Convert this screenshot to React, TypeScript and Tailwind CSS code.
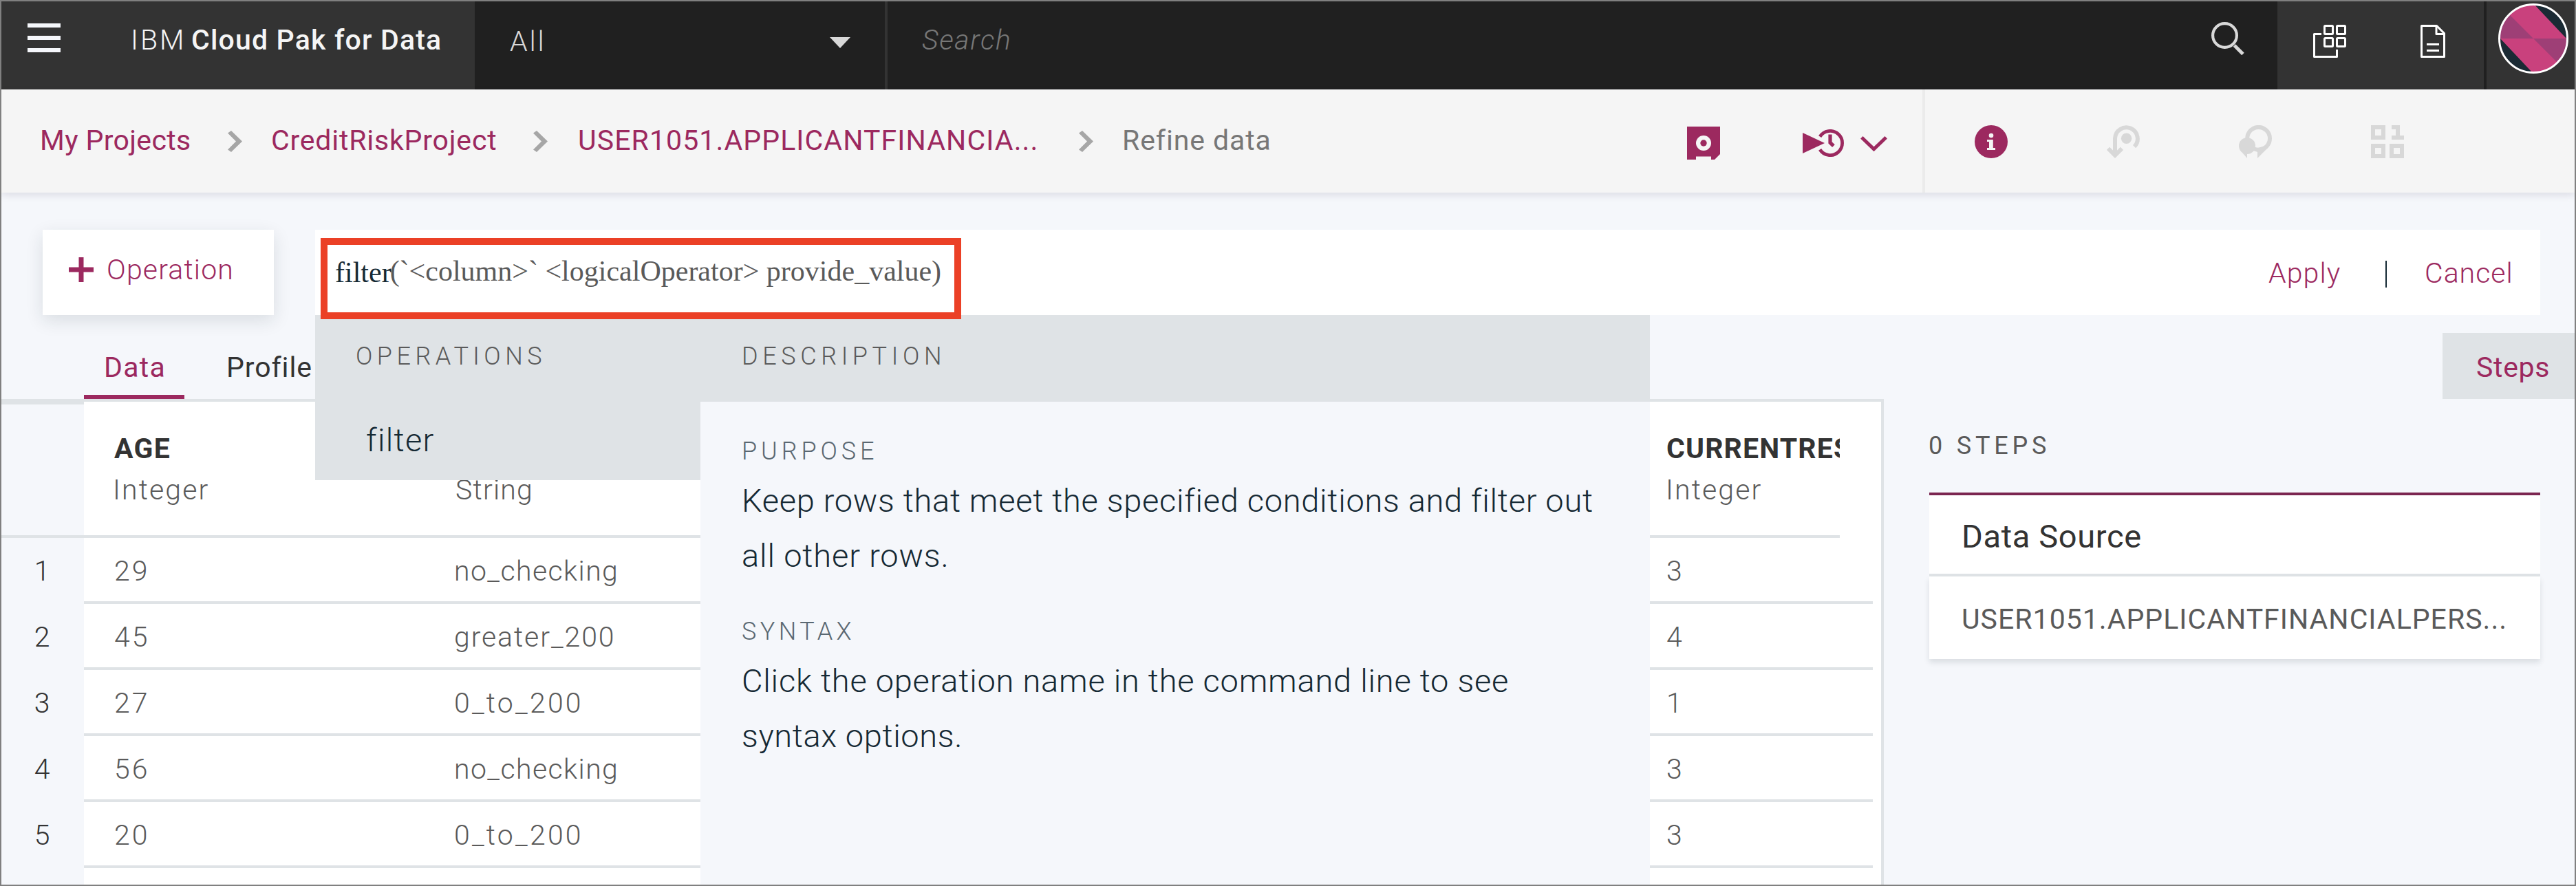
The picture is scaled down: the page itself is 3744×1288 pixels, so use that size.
import React from "react";

const numbers = ["1", "2", "3", "4", "5"];

const rows = [
  { age: "29", checking: "no_checking", residence: "3" },
  { age: "45", checking: "greater_200", residence: "4" },
  { age: "27", checking: "0_to_200", residence: "1" },
  { age: "56", checking: "no_checking", residence: "3" },
  { age: "20", checking: "0_to_200", residence: "3" },
];

function Crumb() {
  return (
    <svg className="mt-[60px] h-[31px] w-[21px] shrink-0" viewBox="0 0 21 31" fill="#a6a6a6">
      <path d="M5 0 21 15.5 5 31 0 27.5 12 15.5 0 3.5Z" />
    </svg>
  );
}

function Header() {
  return (
    <header className="flex h-[128px] shrink-0 text-[41px] font-light text-[#f5f5f5]">
      <div className="flex w-[688px] bg-[#333333] pl-[38px]">
        <div className="mt-[32px] flex w-[48px] shrink-0 flex-col gap-3">
          <span className="h-[6px] bg-[#f5f7fb]" />
          <span className="h-[6px] bg-[#f5f7fb]" />
          <span className="h-[6px] bg-[#f5f7fb]" />
        </div>
        <span className="ml-[102px] w-[88px] leading-[112px] tracking-[3px]">IBM</span>
        <span className="whitespace-nowrap font-medium leading-[112px] tracking-[1.17px]">Cloud Pak for Data</span>
      </div>
      <div className="flex w-[600px] justify-between border-r-4 border-[#333333] bg-[#202020] pl-[51px] pr-[50px]">
        <span className="leading-[116px] tracking-[2.8px] text-[#d8d8d8]">All</span>
        <svg className="mt-[52px] h-[16px] w-[30px]" viewBox="0 0 30 16" fill="#d8d8d8">
          <path d="M0 0H30L15 16Z" />
        </svg>
      </div>
      <div className="flex flex-1 justify-between bg-[#202020] pl-[50px] pr-[48px]">
        <span className="italic leading-[112px] tracking-[1.6px] text-[#777777]">Search</span>
        <svg className="mt-[30px] h-[48px] w-[48px]" viewBox="0 0 48 48" fill="none" stroke="#d8d8d8">
          <circle cx="19.5" cy="19.5" r="17.4" strokeWidth="4.2" />
          <path d="M33.5 34 46 46.5" strokeWidth="5" />
        </svg>
      </div>
      <div className="flex w-[432px] bg-[#333333]">
        <svg className="ml-[52px] mt-[34px] h-[48px] w-[48px]" viewBox="0 0 48 48" fill="none" stroke="#ffffff" strokeWidth="3" strokeLinejoin="round">
          <rect x="16.5" y="1.5" width="12" height="12" rx="1" />
          <rect x="34.5" y="1.5" width="12" height="12" rx="1" />
          <rect x="16.5" y="19.5" width="12" height="12" rx="1" />
          <rect x="34.5" y="19.5" width="12" height="12" rx="1" />
          <path d="M12 13.5H1.5V46.5H34.5V36" />
        </svg>
        <svg className="ml-[108px] mt-[34px] h-[48px] w-[36px]" viewBox="0 0 36 48" fill="none" stroke="#ffffff" strokeWidth="3" strokeLinejoin="round">
          <path d="M1.5 1.5H23.5L34.5 12.5V46.5H1.5Z" />
          <path d="M23 1.5V13.5H34.5M9 28.5H27M9 37.5H27" />
        </svg>
        <div className="ml-[56px] w-[4px] bg-[#202020]" />
        <svg className="ml-[17px] mt-[3px] h-[102px] w-[102px]" viewBox="0 0 102 102">
          <clipPath id="face">
            <circle cx="51" cy="51" r="49" />
          </clipPath>
          <g clipPath="url(#face)">
            <path fill="#c9417d" d="M0 0H102V102H0Z" />
            <path fill="#9e3f76" d="M0 51H51L0 0ZM51 51H102V102Z" />
            <path fill="#1a2a34" d="M51 0 102 54V0ZM0 48 51 102H0Z" />
          </g>
          <circle cx="51" cy="51" r="49.5" fill="none" stroke="#ffffff" strokeWidth="3" />
        </svg>
      </div>
    </header>
  );
}

function Toolbar() {
  return (
    <nav className="relative flex h-[150px] shrink-0 bg-[#f5f5f5] pl-[56px] text-[41px] leading-[148px] text-[#9c295f] shadow-[0_4px_10px_rgba(40,30,60,0.11)]">
      <span className="w-[273px] tracking-[0.35px]">My Projects</span>
      <Crumb />
      <span className="ml-[42px] w-[381px] tracking-[0.8px]">CreditRiskProject</span>
      <Crumb />
      <span className="ml-[44px] w-[728px] tracking-[1.1px]">USER1051.APPLICANTFINANCIA...</span>
      <Crumb />
      <span className="ml-[42px] tracking-[0.9px] text-[#777777]">Refine data</span>
      <div className="ml-auto mr-[248px] flex">
        <svg className="mt-[54px] h-[48px] w-[48px]" viewBox="0 0 48 48">
          <path fill="#9c295f" d="M0 0H48V40L40 48H35V43.5H13V48H0Z" />
          <circle cx="24" cy="24" r="11" fill="#f5f5f5" />
          <circle cx="24" cy="24" r="4.7" fill="#9c295f" />
        </svg>
        <svg className="ml-[120px] mt-[58px] h-[40px] w-[60px]" viewBox="0 0 60 40" fill="none" stroke="#9c295f" strokeWidth="4.8">
          <path d="M0 5 32 20 0 35Z" fill="#9c295f" stroke="none" />
          <path d="M25.1 10.6A17.6 17.6 0 1 1 25.1 29.4" />
          <path d="M40 7.5V19.3L44.9 24.2" strokeWidth="5.2" />
        </svg>
        <svg className="ml-[23.5px] mt-[67.5px] h-[22.5px] w-[39px]" viewBox="0 0 39 22.5" fill="none" stroke="#9c295f" strokeWidth="5">
          <path d="M1.8 1.8 19.5 18.8 37.2 1.8" />
        </svg>
        <div className="ml-[51.5px] w-[4px] bg-[#ebebeb]" />
        <svg className="ml-[72px] mt-[52px] h-[48px] w-[48px]" viewBox="0 0 48 48">
          <circle cx="24" cy="24" r="24" fill="#9c295f" />
          <circle cx="24" cy="15" r="3.3" fill="#f5f5f5" />
          <path fill="#f5f5f5" d="M18 21H26.8V33H30V36H18V33H21V24H18Z" />
        </svg>
        <svg className="ml-[144px] mt-[52px] h-[48px] w-[48px]" viewBox="0 0 48 48" fill="none" stroke="#d8d8d8" strokeWidth="6">
          <path d="M12 43V19.3A16.4 16.4 0 1 1 40.1 31.2" />
          <path d="M2 33.8 12 43.8 22 33.8" />
          <circle cx="28.6" cy="19.3" r="7.7" fill="#d8d8d8" stroke="none" />
        </svg>
        <svg className="ml-[144px] mt-[52px] h-[48px] w-[48px]" viewBox="0 0 48 48" fill="#d8d8d8">
          <circle cx="28.6" cy="19.3" r="16.4" fill="none" stroke="#d8d8d8" strokeWidth="6" />
          <circle cx="12" cy="30" r="12" />
          <path d="M2.5 37 12 48V40ZM21 35 27 39V48L43 32 38 30Z" />
        </svg>
        <svg className="ml-[144px] mt-[52px] h-[48px] w-[48px]" viewBox="0 0 48 48" fill="none" stroke="#d8d8d8" strokeWidth="6">
          <path d="M3 3H18V18H3ZM3 30H18V45H3ZM30 30H45V45H30Z" />
          <path fill="#d8d8d8" stroke="none" d="M30 0H42V15H48V21H30V15H36V6H30Z" />
        </svg>
      </div>
    </nav>
  );
}

function OperationsMenu() {
  return (
    <div className="absolute left-0 top-full grid w-[1940px] grid-cols-[560px_1380px] font-light">
      <div className="h-[240px] bg-[#dfe3e6]">
        <div className="h-[126px] pl-[59px] text-[36px] leading-[120px] tracking-[6.45px] text-[#5a5a5a]">OPERATIONS</div>
        <div className="pl-[74px] text-[47px] leading-[112px] tracking-[1.3px] text-[#152934]">filter</div>
      </div>
      <div className="h-[828px] bg-[#f5f7fb] text-[#152934]">
        <div className="h-[126px] bg-[#dfe3e6] pl-[60px] text-[36px] leading-[120px] tracking-[6.6px] text-[#5a5a5a]">DESCRIPTION</div>
        <div className="flex flex-col gap-[40px] pl-[60px] pt-[42px] text-[47px] leading-[80px]">
          <section>
            <h3 className="mb-[2px] text-[36px] leading-[60px] tracking-[5.9px] text-[#5a6872]">PURPOSE</h3>
            <p className="tracking-[0.7px]">
              Keep rows that meet the specified conditions and filter out
              <br />
              <span className="tracking-[0.85px]">all other rows.</span>
            </p>
          </section>
          <section>
            <h3 className="mb-[2px] text-[36px] leading-[60px] tracking-[5.4px] text-[#5a6872]">SYNTAX</h3>
            <p className="tracking-[0.76px]">
              Click the operation name in the command line to see
              <br />
              <span className="tracking-[0.6px]">syntax options.</span>
            </p>
          </section>
        </div>
      </div>
    </div>
  );
}

function CommandRow() {
  return (
    <div className="relative z-10 ml-[60px] mt-[54px] flex h-[124px] shrink-0 gap-[60px] text-[41px] font-light text-[#9c295f]">
      <button className="flex w-[336px] bg-white pl-[38px] shadow-[0_8px_24px_rgba(21,41,52,0.12)]">
        <svg className="mt-[40px] h-[36px] w-[36px]" viewBox="0 0 36 36" stroke="#9c295f" strokeWidth="7">
          <path d="M18 0V36M0 18H36" />
        </svg>
        <span className="ml-[19px] leading-[116px] tracking-[1.15px]">Operation</span>
      </button>
      <div className="relative flex w-[3234px] bg-white">
        <div className="whitespace-nowrap pl-[29px] font-['Liberation_Serif',serif] text-[42px] font-normal leading-[124px] text-[#5a5a5a]">
          <span className="text-[#152934]">filter</span>
          <span className="relative -top-[2px] -ml-[2px]">{"(`<column>` <logicalOperator> provide_value)"}</span>
        </div>
        <div className="ml-auto flex leading-[126px]">
          <span className="w-[170px] tracking-[1.1px]">Apply</span>
          <span className="mt-[45px] h-[39px] w-[2px] bg-[#152934]" />
          <span className="ml-[55px] w-[168px] tracking-[1px]">Cancel</span>
        </div>
        <OperationsMenu />
        <div className="absolute left-[8px] top-[12px] h-[118px] w-[931px] border-[10px] border-[#eb4026]" />
      </div>
    </div>
  );
}

function Tabs() {
  return (
    <div className="flex h-[122px] shrink-0 items-end pl-[120px] text-[41px] leading-[84px]">
      <div className="h-[88px] w-[146px] border-b-[6px] border-[#9c295f] pl-[29px] tracking-[1.3px] text-[#9c295f]">Data</div>
      <div className="h-[88px] pl-[61px] tracking-[0.9px] text-[#333333]">Profile</div>
      <div className="ml-auto h-[96px] w-[192px] bg-[#dfe3e6] pl-[49px] leading-[100px] tracking-[0.7px] text-[#9c295f]">Steps</div>
    </div>
  );
}

function DataTable() {
  return (
    <div className="flex text-[41px] font-light text-[#5a5a5a]">
      <div className="w-[120px] border-t-8 border-[#dfe3e6] text-center text-[#333333]">
        <div className="h-[194px] border-b-4 border-[#dfe3e6]" />
        {numbers.map((n) => (
          <div key={n} className="h-[96px] pr-[2px] leading-[96px]">{n}</div>
        ))}
      </div>
      <div className="w-[2616px] border-r-4 border-t-4 border-[#dfe3e6] bg-white">
        <div className="grid h-[198px] w-[2552px] grid-cols-[494px_1763px_295px] overflow-hidden border-b-4 border-[#dfe3e6] pt-[38px] leading-[60px]">
          <div className="pl-[44px]">
            <div className="font-bold tracking-[1.3px] text-[#333333]">AGE</div>
            <div className="-ml-[2px] tracking-[2.1px]">Integer</div>
          </div>
          <div className="pl-[46px] pt-[60px] tracking-[1.2px]">String</div>
          <div className="overflow-hidden pl-[43px]">
            <div className="font-bold tracking-[1.15px] text-[#333333]">CURRENTRES</div>
            <div className="-ml-px tracking-[2.1px]">Integer</div>
          </div>
        </div>
        {rows.map((r, i) => (
          <div key={i} className="grid h-[96px] w-[2600px] grid-cols-[494px_1763px_343px] border-b-4 border-[#dfe3e6] leading-[96px]">
            <div className="pl-[44px] tracking-[3px]">{r.age}</div>
            <div className={r.checking === "no_checking" ? "pl-[44px] tracking-[1.4px]" : r.checking === "greater_200" ? "pl-[44px] tracking-[1.9px]" : "pl-[44px] tracking-[3.2px]"}>{r.checking}</div>
            <div className="pl-[43px]">{r.residence}</div>
          </div>
        ))}
      </div>
    </div>
  );
}

function StepsPanel() {
  return (
    <aside className="ml-[66px] w-[888px] pt-[38px] text-[#5a5a5a]">
      <div className="-ml-px text-[36px] leading-[60px] tracking-[5.8px]">0 STEPS</div>
      <div className="mt-[38px] border-t-4 border-[#7b2550]">
        <div className="h-[118px] border-b-4 border-[#dfe3e6] bg-white pl-[47px] text-[47px] leading-[120px] tracking-[0.65px] text-[#333333]">Data Source</div>
        <div className="h-[120px] bg-white pl-[47px] text-[41px] leading-[124px] tracking-[1.02px] shadow-[0_5px_8px_rgba(21,41,52,0.12)]">USER1051.APPLICANTFINANCIALPERS...</div>
      </div>
    </aside>
  );
}

export default function App() {
  return (
    <div className="flex h-[1288px] w-[3744px] flex-col overflow-hidden border-2 border-[#808080] bg-[#f5f7fb] font-['Roboto',sans-serif]">
      <Header />
      <Toolbar />
      <CommandRow />
      <Tabs />
      <main className="flex min-h-0 flex-1">
        <DataTable />
        <StepsPanel />
      </main>
    </div>
  );
}
